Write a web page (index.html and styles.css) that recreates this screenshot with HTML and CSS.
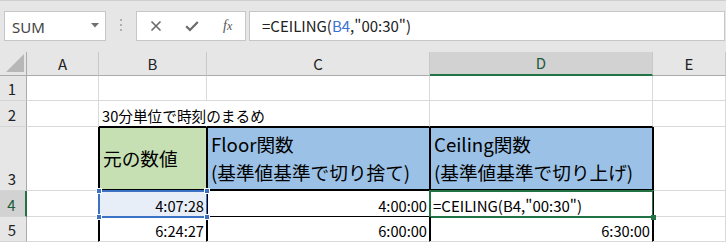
FILE: index.html
```html
<!DOCTYPE html>
<html lang="ja">
<head>
<meta charset="utf-8">
<link rel="stylesheet" href="styles.css">
</head>
<body>
<div class="toolbar">
  <div class="namebox">
    <span class="nb-text">SUM</span>
    <svg class="dd" width="8" height="5" viewBox="0 0 8 5"><path d="M0 0h8L4 4.5z" fill="#707070"/></svg>
  </div>
  <div class="grip"><i></i><i></i><i></i></div>
  <div class="btns">
    <svg width="12" height="12" viewBox="0 0 12 12"><path d="M1.5 1.5l9 9M10.5 1.5l-9 9" stroke="#6a6a6a" stroke-width="1.6" fill="none"/></svg>
    <svg width="14" height="12" viewBox="0 0 14 12"><path d="M1.2 6.2l3.8 3.8L12.8 2" stroke="#6a6a6a" stroke-width="2.2" fill="none"/></svg>
    <span class="fx">f<span class="fx-x">x</span></span>
  </div>
  <div class="fbar">=CEILING(<span class="ref">B4</span>,"00:30")</div>
</div>
<div class="sheet">
  <div class="corner"><svg width="18" height="18" viewBox="0 0 18 18"><path d="M18 0V18H0z" fill="#b7b7b7"/></svg></div>
  <div class="ch">A</div>
  <div class="ch">B</div>
  <div class="ch">C</div>
  <div class="ch ch-sel">D</div>
  <div class="ch">E</div>

  <div class="rh">1</div>
  <div class="cell"></div>
  <div class="cell"></div>
  <div class="cell"></div>
  <div class="cell"></div>
  <div class="cell"></div>

  <div class="rh">2</div>
  <div class="cell"></div>
  <div class="cell over tb">30分単位で時刻のまるめ</div>
  <div class="cell tb"></div>
  <div class="cell tb"></div>
  <div class="cell"></div>

  <div class="rh">3</div>
  <div class="cell lb"></div>
  <div class="cell head green il it">元の数値</div>
  <div class="cell head blue il it"><span>Floor関数<br>(基準値基準で切り捨て)</span></div>
  <div class="cell head blue il it"><span>Ceiling関数<br>(基準値基準で切り上げ)</span></div>
  <div class="cell il"></div>

  <div class="rh rh-sel">4</div>
  <div class="cell lb"></div>
  <div class="cell num tbl il sel-ref">4:07:28<i class="hd h1"></i><i class="hd h2"></i><i class="hd h3"></i><i class="hd h4"></i></div>
  <div class="cell num tbl il">4:00:00</div>
  <div class="cell tbl il edit">=CEILING(B4,"00:30")<i class="fill-h"></i></div>
  <div class="cell il"></div>

  <div class="rh">5</div>
  <div class="cell lb"></div>
  <div class="cell num tblr il">6:24:27</div>
  <div class="cell num tblr il">6:00:00</div>
  <div class="cell num tblr il">6:30:00</div>
  <div class="cell il"></div>
</div>
</body>
</html>
```
FILE: styles.css
```css
* { box-sizing: border-box; }
html, body { margin: 0; padding: 0; }
body {
  width: 726px;
  height: 242px;
  overflow: hidden;
  background: #fff;
  font-family: "Noto Sans CJK JP", "Noto Sans", sans-serif;
  color: #000;
}
.toolbar {
  height: 52px;
  background: #e6e6e6;
  border-top: 1px solid #cfcfcf;
  display: flex;
  align-items: flex-start;
  padding: 10px 1px 0 4px;
}
.namebox {
  width: 102px;
  height: 30px;
  background: #fff;
  border: 1px solid #c6c6c6;
  display: flex;
  align-items: center;
  justify-content: space-between;
  padding: 0 6px 0 7px;
}
.nb-text {
  font-family: "Noto Sans", sans-serif;
  font-size: 15px;
  color: #444;
  padding-top: 2px;
}
.dd { margin-top: -2px; }
.grip {
  width: 30px;
  height: 30px;
  display: flex;
  flex-direction: column;
  align-items: center;
  justify-content: center;
  gap: 3px;
  padding-bottom: 2px;
}
.grip i {
  display: block;
  width: 2px;
  height: 2px;
  background: #b0b0b0;
}
.btns {
  width: 110px;
  height: 30px;
  background: #fff;
  border: 1px solid #c6c6c6;
  display: flex;
  align-items: center;
  padding: 0 0 0 13px;
  gap: 23px;
}
.fx {
  font-family: "Liberation Serif", serif;
  font-style: italic;
  font-size: 14px;
  color: #555;
  margin-left: 1px;
}
.fx-x { font-size: 12px; }
.fbar {
  margin-left: 3px;
  width: 476px;
  height: 30px;
  background: #fff;
  border: 1px solid #c6c6c6;
  font-size: 15px;
  line-height: 28px;
  padding-left: 12px;
  color: #222;
}
.ref { color: #3a74d0; }

.sheet {
  display: grid;
  grid-template-columns: 27px 72px 108px 223px 223px 73px;
  grid-template-rows: 24px 25px 26px 64px 26px 25px;
  font-size: 14.67px;
}
.corner {
  background: #e6e6e6;
  border-right: 1px solid #ababab;
  border-bottom: 1px solid #ababab;
  display: flex;
  align-items: flex-end;
  justify-content: flex-end;
  padding: 0 2px 3px 0;
}
.ch {
  background: #e6e6e6;
  border-right: 1px solid #c8c8c8;
  border-bottom: 1px solid #ababab;
  display: flex;
  align-items: center;
  justify-content: center;
  color: #222;
  font-size: 15px;
  line-height: 20px;
}
.ch-sel {
  background: #d2d2d2;
  border-bottom: 2px solid #217346;
  color: #1d5b3c;
}
.rh {
  background: #e6e6e6;
  border-right: 1px solid #ababab;
  border-bottom: 1px solid #d4d4d4;
  display: flex;
  align-items: flex-end;
  justify-content: center;
  font-size: 15px;
  line-height: 20px;
  padding-bottom: 1px;
  padding-right: 2px;
  color: #222;
}
.rh-sel {
  background: #d2d2d2;
  border-right: 2px solid #217346;
  color: #1d5b3c;
}
.cell {
  border-right: 1px solid #d9d9d9;
  border-bottom: 1px solid #d9d9d9;
  display: flex;
  align-items: flex-end;
  line-height: 20px;
  padding: 0 2px 0 3px;
  white-space: nowrap;
  position: relative;
}
.over {
  overflow: visible;
  border-right-color: transparent;
}
.tb { border-bottom-color: #000; }
.lb { border-right-color: #000; }
.il { box-shadow: inset 1px 0 0 #000; }
.it.il { box-shadow: inset 1px 1px 0 #000; }
.head {
  font-size: 18.67px;
  line-height: 28px;
  align-items: center;
  padding-left: 4px;
  padding-bottom: 0;
  border-right-color: #000;
  border-bottom: 2px solid #000;
}
.green { background: #c6e0b4; }
.blue { background: #9bc2e6; }
.num { justify-content: flex-end; }
.tbl { border-right-color: #000; border-bottom-color: #000; }
.tblr { border-right-color: #000; }

.sel-ref { background: #e8eef8; }
.sel-ref::after {
  content: "";
  position: absolute;
  top: -1px;
  left: -1px;
  right: -2px;
  bottom: -2px;
  border: 2px solid #3b72c6;
}
.hd {
  position: absolute;
  width: 6px;
  height: 6px;
  background: #3b72c6;
  border: 1px solid #fff;
  z-index: 2;
}
.h1 { top: -3px; left: -3px; }
.h2 { top: -3px; right: -4px; }
.h3 { bottom: -4px; left: -3px; }
.h4 { bottom: -4px; right: -4px; }

.edit {
  background: #fff;
  padding-left: 3px;
  font-size: 15px;
}
.edit::after {
  content: "";
  position: absolute;
  top: -1px;
  left: -1px;
  right: -2px;
  bottom: -2px;
  border: 2px solid #217346;
}
.fill-h {
  position: absolute;
  right: -4px;
  bottom: -4px;
  width: 5px;
  height: 5px;
  background: #217346;
  z-index: 2;
}
```
